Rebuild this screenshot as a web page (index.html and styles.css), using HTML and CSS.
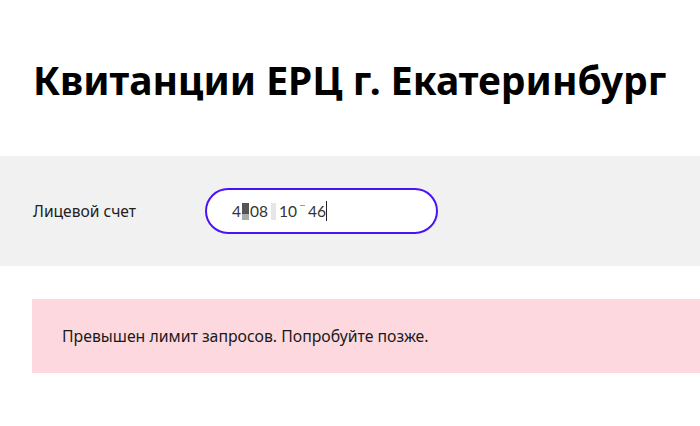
FILE: index.html
```html
<!DOCTYPE html><html lang="ru">
<head>
    <meta charset="UTF-8">
    <meta name="viewport" content="width=device-width, initial-scale=1.0">
    <title>Квитанции ЕРЦ</title>
    <link rel="stylesheet" href="styles.css">
</head>
<body>
    <h1 class="title">Квитанции ЕРЦ г. Екатеринбург</h1>

    <div class="account-row">
        <label class="account-label" for="account">Лицевой счет</label>
        <div class="account-input" id="account">
            <span>4</span><span class="mask mask-dark"></span><span>08</span><span class="mask mask-light"></span><span class="part">10</span><span class="mask mask-dash"></span><span class="part">46</span><span class="caret"></span>
        </div>
    </div>

    <div class="error">Превышен лимит запросов. Попробуйте позже.</div>
</body>
</html>
```

FILE: styles.css
```css
body {
    margin: 0;
    font-family: "Noto Sans", "Open Sans", sans-serif;
    background: white;
    color: #111;
}
.title {
    margin: 0;
    padding: 53px 33px 0;
    height: 156px;
    box-sizing: border-box;
    font-size: 39px;
    font-weight: 700;
    line-height: 54px;
    color: black;
    white-space: nowrap;
}
.account-row {
    display: flex;
    align-items: center;
    height: 110px;
    padding-left: 33px;
    background: #f1f1f1;
}
.account-label {
    width: 172px;
    font-size: 15.6px;
    color: #222;
}
.account-input {
    display: flex;
    align-items: center;
    width: 233px;
    height: 46px;
    box-sizing: border-box;
    padding-left: 25px;
    border: 2px solid #4b12f5;
    border-radius: 23px;
    background: white;
    font-family: Lato, sans-serif;
    font-size: 15.5px;
    color: #333;
}
.part {
    margin-left: 3px;
}
.mask {
    display: inline-block;
    height: 17px;
}
.mask-dark {
    width: 7px;
    margin: 0 1px;
    background: linear-gradient(#555 0, #555 11px, #aaa 11px);
}
.mask-light {
    width: 5px;
    margin-left: 3px;
    background: #e6e6e6;
}
.mask-dash {
    width: 5px;
    height: 1px;
    margin: 0 0 12px 3px;
    background: #999;
}
.caret {
    display: inline-block;
    width: 1px;
    height: 20px;
    background: #222;
}
.error {
    margin: 33px 0 0 32px;
    height: 74px;
    padding-left: 30px;
    display: flex;
    align-items: center;
    background: #fdd9df;
    font-size: 15.8px;
    color: #1a1a1a;
}
```
